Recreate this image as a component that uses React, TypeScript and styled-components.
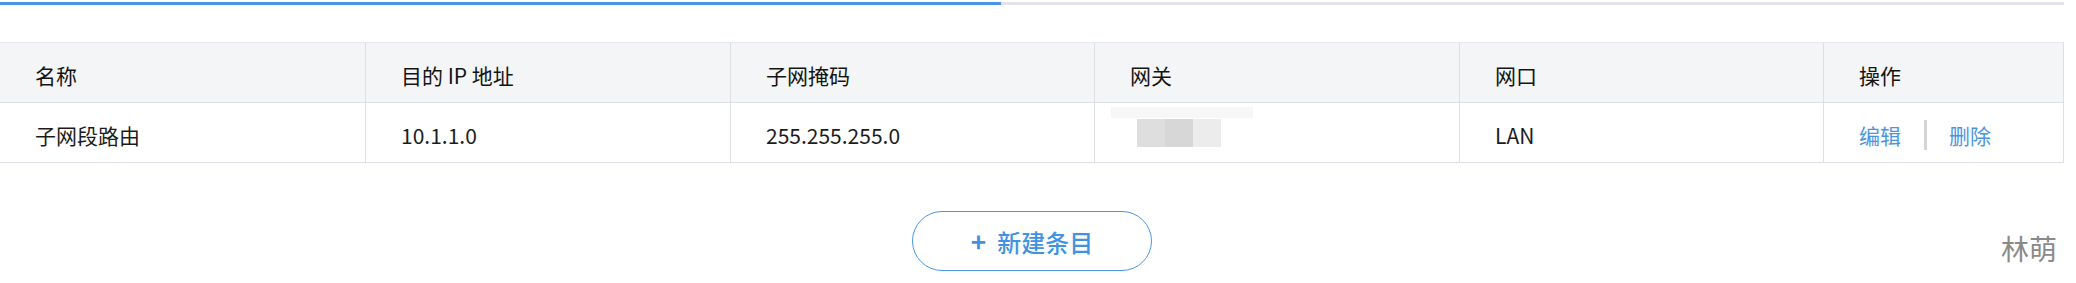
import React from 'react'
import styled, { createGlobalStyle } from 'styled-components'

const GlobalStyle = createGlobalStyle`
  html, body {
    margin: 0;
    padding: 0;
    background: #ffffff;
  }
  body {
    font-family: 'Noto Sans CJK SC', 'Noto Sans', sans-serif;
    color: #1f1f1f;
  }
`

const Page = styled.div`
  width: 2064px;
  padding-top: 2px;
`

const Track = styled.div`
  height: 3px;
  background-color: #e3e5ea;
`

const Bar = styled.div`
  height: 100%;
  background-color: #4a96e6;
`

const Table = styled.div`
  margin-top: 37px;
  display: grid;
  grid-template-columns: 366px 365px 364px 365px 364px 1fr;
  border-top: 1px solid #e6e8ec;
  border-right: 1px solid #dcdfe3;
`

const Cell = styled.div<{ $head?: boolean; $last?: boolean }>`
  display: flex;
  align-items: center;
  padding: 4px 0 0 35px;
  box-sizing: border-box;
  height: 60px;
  font-size: 21px;
  color: ${({ $head }) => ($head ? '#141414' : '#1c1c1c')};
  background-color: ${({ $head }) => ($head ? '#f4f5f7' : '#ffffff')};
  border-bottom: 1px solid #dcdfe3;
  border-right: ${({ $last }) => ($last ? 'none' : '1px solid #dcdfe3')};
`

const Masked = styled.div`
  position: relative;
  display: flex;
  margin-left: 7px;
  margin-top: -4px;

  &::before {
    content: '';
    position: absolute;
    left: -26px;
    top: -12px;
    width: 142px;
    height: 11px;
    background-color: #f7f7f7;
  }
`

const Block = styled.span<{ $tone: string }>`
  width: 28px;
  height: 28px;
  background-color: ${({ $tone }) => $tone};
`

const Actions = styled.div`
  display: flex;
  align-items: center;
`

const ActionLink = styled.a`
  color: #4b95df;
  font-size: 21px;
  text-decoration: none;
  cursor: pointer;
`

const Divider = styled.span`
  width: 3px;
  height: 30px;
  margin: 0 22px 0 23px;
  background-color: #d4d4d4;
`

const Footer = styled.div`
  margin-top: 48px;
  display: grid;
  grid-template-columns: 1fr auto 1fr;
  align-items: center;
`

const AddButton = styled.button`
  grid-column: 2;
  width: 240px;
  height: 60px;
  border: 1px solid #4a98e4;
  border-radius: 30px;
  background: #ffffff;
  color: #4192e2;
  font-family: 'Noto Sans CJK SC', sans-serif;
  font-size: 24px;
  font-weight: 500;
  display: flex;
  align-items: center;
  justify-content: center;
  gap: 11px;
  padding: 0;
  cursor: pointer;
`

const Plus = styled.span`
  font-size: 26px;
  font-weight: 700;
  line-height: 1;
`

const Owner = styled.div`
  justify-self: end;
  margin: 13px 7px 0 0;
  font-size: 28px;
  color: #8a8a8a;
`

const columns = ['名称', '目的 IP 地址', '子网掩码', '网关', '网口', '操作']

const App: React.FC = () => {
  const progress = 1000.7 / 2064

  return (
    <>
      <GlobalStyle />
      <Page>
        <Track>
          <Bar style={{ width: `${progress * 100}%` }} />
        </Track>
        <Table>
          {columns.map((title, i) => (
            <Cell key={title} $head $last={i === columns.length - 1}>
              {title}
            </Cell>
          ))}
          <Cell>子网段路由</Cell>
          <Cell>10.1.1.0</Cell>
          <Cell>255.255.255.0</Cell>
          <Cell>
            <Masked>
              <Block $tone="#dedede" />
              <Block $tone="#d7d7d7" />
              <Block $tone="#ececec" />
            </Masked>
          </Cell>
          <Cell>LAN</Cell>
          <Cell $last>
            <Actions>
              <ActionLink>编辑</ActionLink>
              <Divider />
              <ActionLink>删除</ActionLink>
            </Actions>
          </Cell>
        </Table>
        <Footer>
          <AddButton>
            <Plus>+</Plus>
            新建条目
          </AddButton>
          <Owner>林萌</Owner>
        </Footer>
      </Page>
    </>
  )
}

export default App
